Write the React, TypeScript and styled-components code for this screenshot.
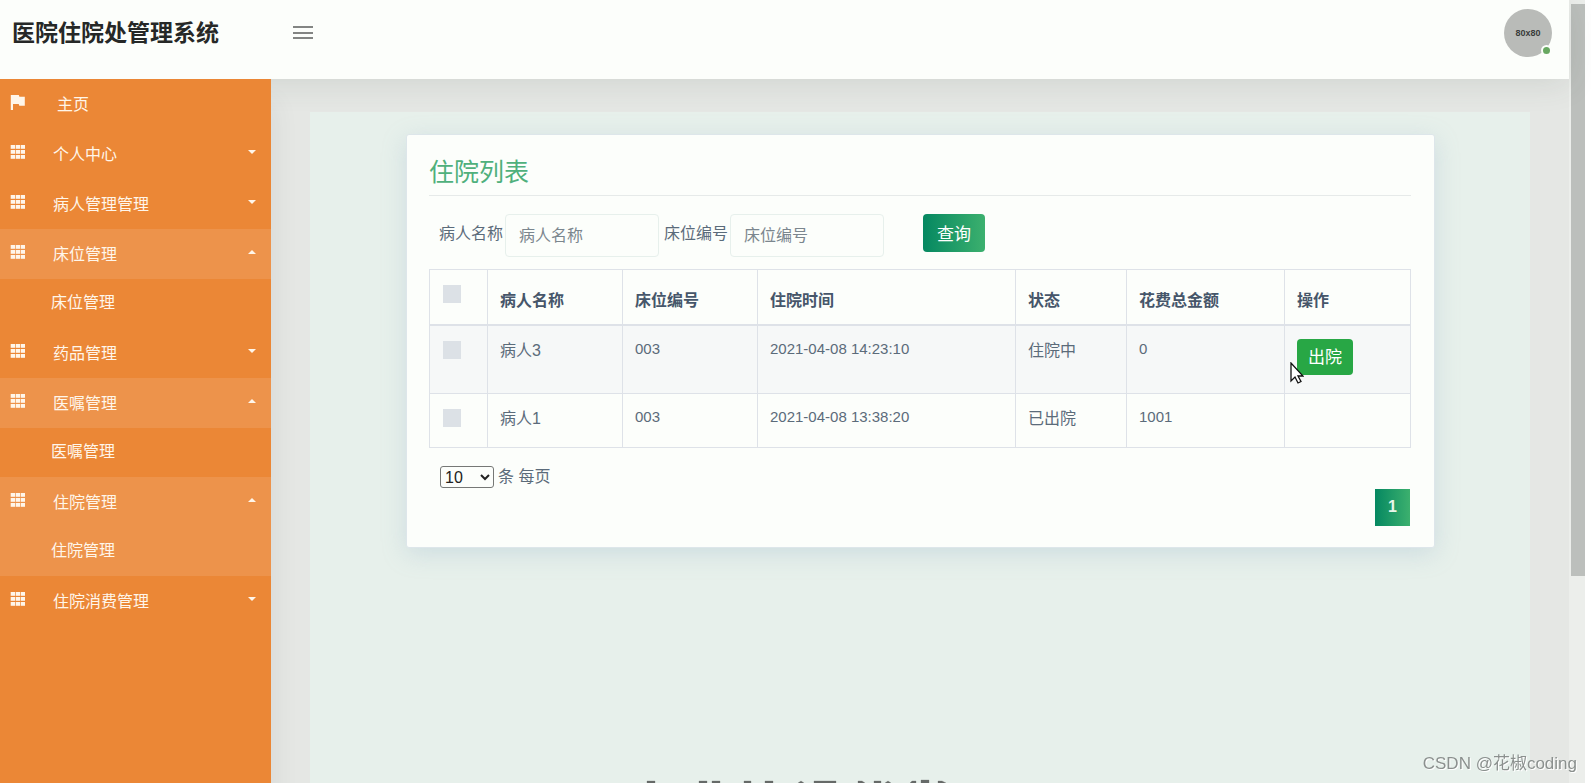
import React from "react";
import styled, { createGlobalStyle } from "styled-components";

const sans = `"Liberation Sans", "Noto Sans CJK SC", sans-serif`;
const gradient = "linear-gradient(90deg, #058861, #3cb06e)";

const Global = createGlobalStyle`
  *, *::before, *::after { box-sizing: border-box; }
  body { margin: 0; background: #fff; font-family: ${sans}; color: #5b6b7a; font-size: 16px; }
  button, input, select { font-family: inherit; margin: 0; }
`;

const Screen = styled.div`
  display: flex;
  min-height: 100vh;
  padding-right: 6px;
`;

const Frame = styled.div`
  flex: 1;
  min-width: 0;
  display: flex;
  flex-direction: column;
`;

const Header = styled.header`
  position: relative;
  z-index: 2;
  display: flex;
  align-items: flex-start;
  height: 79px;
  padding: 9px 17px 0 12px;
  background: #fcfefb;
  box-shadow: 0 4px 32px rgba(60, 70, 65, 0.12);
`;

const Brand = styled.h1`
  margin: 0;
  width: 281px;
  font-size: 23px;
  line-height: 48px;
  font-weight: 700;
  color: #262827;
`;

const MenuToggle = styled.button`
  display: flex;
  padding: 17px 0 0;
  border: 0;
  background: none;
`;

const Avatar = styled.div`
  position: relative;
  display: grid;
  place-items: center;
  width: 48px;
  height: 48px;
  margin-left: auto;
  border-radius: 50%;
  background: #b9bbb8;
  color: #3a3c3b;
  font-size: 9px;
  font-weight: 700;
`;

const OnlineDot = styled.span`
  position: absolute;
  right: 0;
  bottom: 1px;
  width: 11px;
  height: 11px;
  border: 2px solid #fcfefb;
  border-radius: 50%;
  background: #68a861;
`;

const Body = styled.div`
  flex: 1;
  display: flex;
`;

const Sidebar = styled.nav`
  position: relative;
  z-index: 3;
  flex: none;
  width: 271px;
  background: #eb8736;
  box-shadow: 3px 24px 24px rgba(60, 70, 65, 0.08);
`;

const MenuList = styled.ul`
  margin: 0;
  padding: 0;
  list-style: none;
`;

const MenuItem = styled.li<{ $lit?: boolean }>`
  background: ${(p) => (p.$lit ? "#ed934b" : "transparent")};
`;

const MenuLink = styled.a<{ $lit?: boolean; $home?: boolean }>`
  display: flex;
  align-items: center;
  height: 50px;
  padding: 0 15px 0 10px;
  background: ${(p) => (p.$lit ? "#ed934b" : "transparent")};
  color: #fff6ea;
  font-size: 16px;
  line-height: 24px;
  text-decoration: none;

  span {
    flex: 1;
    padding-top: 2px;
    padding-left: ${(p) => (p.$home ? "31px" : "27px")};
  }
  svg { margin-bottom: 4px; }
`;

const SubLink = styled.a`
  display: block;
  height: 49px;
  padding: 12px 0 0 51px;
  color: #fff6ea;
  font-size: 16px;
  line-height: 24px;
  text-decoration: none;
`;

const Main = styled.main`
  flex: 1;
  min-width: 0;
  padding: 33px 39px 0;
  background: #e5e7e4;
  display: flex;
`;

const Panel = styled.div`
  flex: 1;
  min-width: 0;
  padding: 22px 95px 0 96px;
  background: #e7f0eb;
`;

const Card = styled.section`
  padding: 19px 23px 21px 22px;
  border: 1px solid #dde6ea;
  border-radius: 3px;
  background: #fcfefb;
  box-shadow: 0 6px 24px rgba(130, 165, 195, 0.26);
`;

const CardTitle = styled.h2`
  margin: 0 0 18px;
  padding-bottom: 5px;
  border-bottom: 1px solid #e6eae9;
  font-size: 25px;
  line-height: 36px;
  font-weight: 400;
  color: #4fb07c;
`;

const SearchForm = styled.form`
  display: flex;
  align-items: flex-start;
  padding-left: 10px;
  margin-bottom: 12px;
`;

const Field = styled.label`
  display: flex;
  gap: 2px;
  margin-right: 5px;
  line-height: 40px;
  font-size: 16px;
`;

const FieldInput = styled.input`
  width: 154px;
  height: 43px;
  padding: 0 13px;
  border: 1px solid #e7f0ec;
  border-radius: 4px;
  background: transparent;
  font-size: 16px;
  color: #5b6b7a;
  &::placeholder { color: #7b868e; opacity: 1; }
`;

const SearchButton = styled.button`
  width: 62px;
  height: 38px;
  margin-left: 34px;
  padding: 0 0 2px;
  border: 0;
  border-radius: 4px;
  background: ${gradient};
  color: #fff;
  font-size: 17px;
`;

const Table = styled.table`
  width: 100%;
  table-layout: fixed;
  border-collapse: collapse;
  line-height: 24px;
`;

const Th = styled.th`
  height: 55px;
  padding: 8px 12px 0;
  border: 1px solid #dee2e8;
  border-bottom-width: 2px;
  font-size: 16px;
  font-weight: 600;
  text-align: left;
  vertical-align: middle;
  color: #46566a;
`;

const Row = styled.tr<{ $striped?: boolean; $tall?: boolean }>`
  height: ${(p) => (p.$tall ? "69px" : "54px")};
  background: ${(p) => (p.$striped ? "#f6f8f8" : "transparent")};
`;

const Td = styled.td<{ $latin?: boolean }>`
  padding: ${(p) => (p.$latin ? "11px 12px 0" : "13px 12px 0")};
  border: 1px solid #dee2e8;
  font-size: ${(p) => (p.$latin ? "15px" : "16px")};
  vertical-align: top;
`;

const Check = styled.input`
  appearance: none;
  display: block;
  width: 18px;
  height: 18px;
  margin: 0 0 0 1px;
  background: #dce1e6;
`;

const CheckTh = styled(Th)`
  padding-top: 15px;
  vertical-align: top;
`;

const CheckTd = styled(Td)`
  padding-top: 15px;
`;

const DischargeButton = styled.button`
  display: block;
  width: 56px;
  height: 36px;
  padding: 0 0 2px;
  border: 0;
  border-radius: 4px;
  background: #28a745;
  color: #fff;
  font-size: 17px;
`;

const PageSize = styled.label`
  display: flex;
  align-items: center;
  gap: 4px;
  padding: 17px 0 0 11px;
  font-size: 16px;
  line-height: 24px;
`;

const PageSelect = styled.select`
  width: 54px;
  height: 22px;
  padding: 0;
  border: 1px solid #767876;
  border-radius: 3px;
  background: #fcfefb;
  color: #222;
  font-size: 16px;
`;

const Pager = styled.div`
  display: flex;
  justify-content: flex-end;
  padding-right: 1px;
`;

const PageButton = styled.button`
  width: 35px;
  height: 37px;
  padding: 0 0 1px;
  border: 0;
  background: ${gradient};
  color: #e8f6ea;
  font-size: 16px;
  font-weight: 700;
`;

const ScrollTrack = styled.div`
  width: 16px;
  padding: 4px 0 0 2px;
  background: #eceeeb;
`;

const ScrollThumb = styled.div`
  height: 73vh;
  background: #bcbfbc;
`;

const Pointer = styled.svg`
  position: absolute;
  left: -7px;
  top: 23px;
`;

const PointerHost = styled.div`
  position: relative;
`;

const Watermark = styled.div`
  position: fixed;
  right: 14px;
  bottom: 6px;
  z-index: 5;
  font-size: 17px;
  line-height: 26px;
  color: #8b908e;
  text-shadow: 1px 1px 0 #fff;
`;

const Caption = styled.svg`
  position: fixed;
  left: 644px;
  bottom: 0;
  z-index: 5;
`;

const GridIcon = () => (
  <svg width="16" height="14" viewBox="0 0 16 14" fill="currentColor" aria-hidden="true">
    {[0, 5, 10].map((y) =>
      [0, 5, 10].map((x) => <rect key={`${x}-${y}`} x={x + 0.7} y={y} width="4.3" height="3.8" />)
    )}
  </svg>
);

const FlagIcon = () => (
  <svg width="16" height="15" viewBox="0 0 16 15" fill="currentColor" aria-hidden="true">
    <path d="M.8 0h8l.6 1.700h5.400v9H9.300l-.6-1.700H3v6H.8z" />
  </svg>
);

const Caret = ({ up }: { up?: boolean }) => (
  <svg width="8" height="4" viewBox="0 0 8 4" fill="currentColor" aria-hidden="true">
    <path d={up ? "M0 4L4 0l4 4z" : "M0 0h8L4 4z"} />
  </svg>
);

const menu = [
  { label: "个人中心" },
  { label: "病人管理管理" },
  { label: "床位管理", child: "床位管理" },
  { label: "药品管理" },
  { label: "医嘱管理", child: "医嘱管理" },
  { label: "住院管理", child: "住院管理", current: true },
  { label: "住院消费管理" },
];

const rows = [
  { name: "病人3", bed: "003", time: "2021-04-08 14:23:10", state: "住院中", cost: "0", open: true },
  { name: "病人1", bed: "003", time: "2021-04-08 13:38:20", state: "已出院", cost: "1001", open: false },
];

export default function App() {
  return (
    <>
      <Global />
      <Screen>
        <Frame>
          <Header>
            <Brand>医院住院处管理系统</Brand>
            <MenuToggle aria-label="菜单">
              <svg width="21" height="14" viewBox="0 0 21 14" fill="#838583">
                <rect width="20" height="2" y="0" x="0" />
                <rect width="20" height="2" y="6" x="0" />
                <rect width="20" height="2" y="11" x="0" />
              </svg>
            </MenuToggle>
            <Avatar>
              80x80
              <OnlineDot />
            </Avatar>
          </Header>
          <Body>
            <Sidebar>
              <MenuList>
                <MenuItem>
                  <MenuLink href="#" $home>
                    <FlagIcon />
                    <span>主页</span>
                  </MenuLink>
                </MenuItem>
                {menu.map((m) => (
                  <MenuItem key={m.label} $lit={m.current}>
                    <MenuLink href="#" $lit={!!m.child}>
                      <GridIcon />
                      <span>{m.label}</span>
                      <Caret up={!!m.child} />
                    </MenuLink>
                    {m.child && <SubLink href="#">{m.child}</SubLink>}
                  </MenuItem>
                ))}
              </MenuList>
            </Sidebar>
            <Main>
              <Panel>
                <Card>
                  <CardTitle>住院列表</CardTitle>
                  <SearchForm onSubmit={(e) => e.preventDefault()}>
                    <Field>
                      病人名称
                      <FieldInput placeholder="病人名称" />
                    </Field>
                    <Field>
                      床位编号
                      <FieldInput placeholder="床位编号" />
                    </Field>
                    <SearchButton>查询</SearchButton>
                  </SearchForm>
                  <Table>
                    <colgroup>
                      <col width="58" />
                      <col width="135" />
                      <col width="135" />
                      <col />
                      <col width="111" />
                      <col width="158" />
                      <col width="126" />
                    </colgroup>
                    <thead>
                      <tr>
                        <CheckTh>
                          <Check type="checkbox" aria-label="全选" />
                        </CheckTh>
                        {["病人名称", "床位编号", "住院时间", "状态", "花费总金额", "操作"].map((h) => (
                          <Th key={h}>{h}</Th>
                        ))}
                      </tr>
                    </thead>
                    <tbody>
                      {rows.map((r) => (
                        <Row key={r.name} $striped={r.open} $tall={r.open}>
                          <CheckTd>
                            <Check type="checkbox" aria-label={r.name} />
                          </CheckTd>
                          <Td>{r.name}</Td>
                          <Td $latin>{r.bed}</Td>
                          <Td $latin>{r.time}</Td>
                          <Td>{r.state}</Td>
                          <Td $latin>{r.cost}</Td>
                          <Td>
                            {r.open && (
                              <PointerHost>
                                <DischargeButton>出院</DischargeButton>
                                <Pointer width="14" height="22" viewBox="0 0 14 22" aria-hidden="true">
                                  <path
                                    d="M1 1v18l4-4 3 6 3-1.500-3-5.500h5z"
                                    fill="#fff"
                                    stroke="#111"
                                    strokeWidth="1.300"
                                  />
                                </Pointer>
                              </PointerHost>
                            )}
                          </Td>
                        </Row>
                      ))}
                    </tbody>
                  </Table>
                  <PageSize>
                    <PageSelect defaultValue="10">
                      <option>10</option>
                      <option>25</option>
                    </PageSelect>
                    条 每页
                  </PageSize>
                  <Pager>
                    <PageButton>1</PageButton>
                  </Pager>
                </Card>
              </Panel>
            </Main>
          </Body>
        </Frame>
        <ScrollTrack>
          <ScrollThumb />
        </ScrollTrack>
      </Screen>
      <Caption width="306" height="4" viewBox="0 0 306 4" aria-hidden="true">
        <path
          d="M3 4V2h8v2zM55 4V2h8v2zM68 4V2h8v2zM100 4V2h7v2zM121 4V2h8v2zM154 4l3-2 3 2zM170 4V2h22v2zM214 4V2h4l3 2zM230 4V2h7v2zM241 4l3-2 3 2zM266 4l2-2h4v2zM277 4V1h8v3zM294 4V2h4l4 2z"
          fill="#666a68"
          stroke="#c3cac6"
          strokeWidth="1"
          paintOrder="stroke"
        />
      </Caption>
      <Watermark>CSDN @花椒coding</Watermark>
    </>
  );
}
